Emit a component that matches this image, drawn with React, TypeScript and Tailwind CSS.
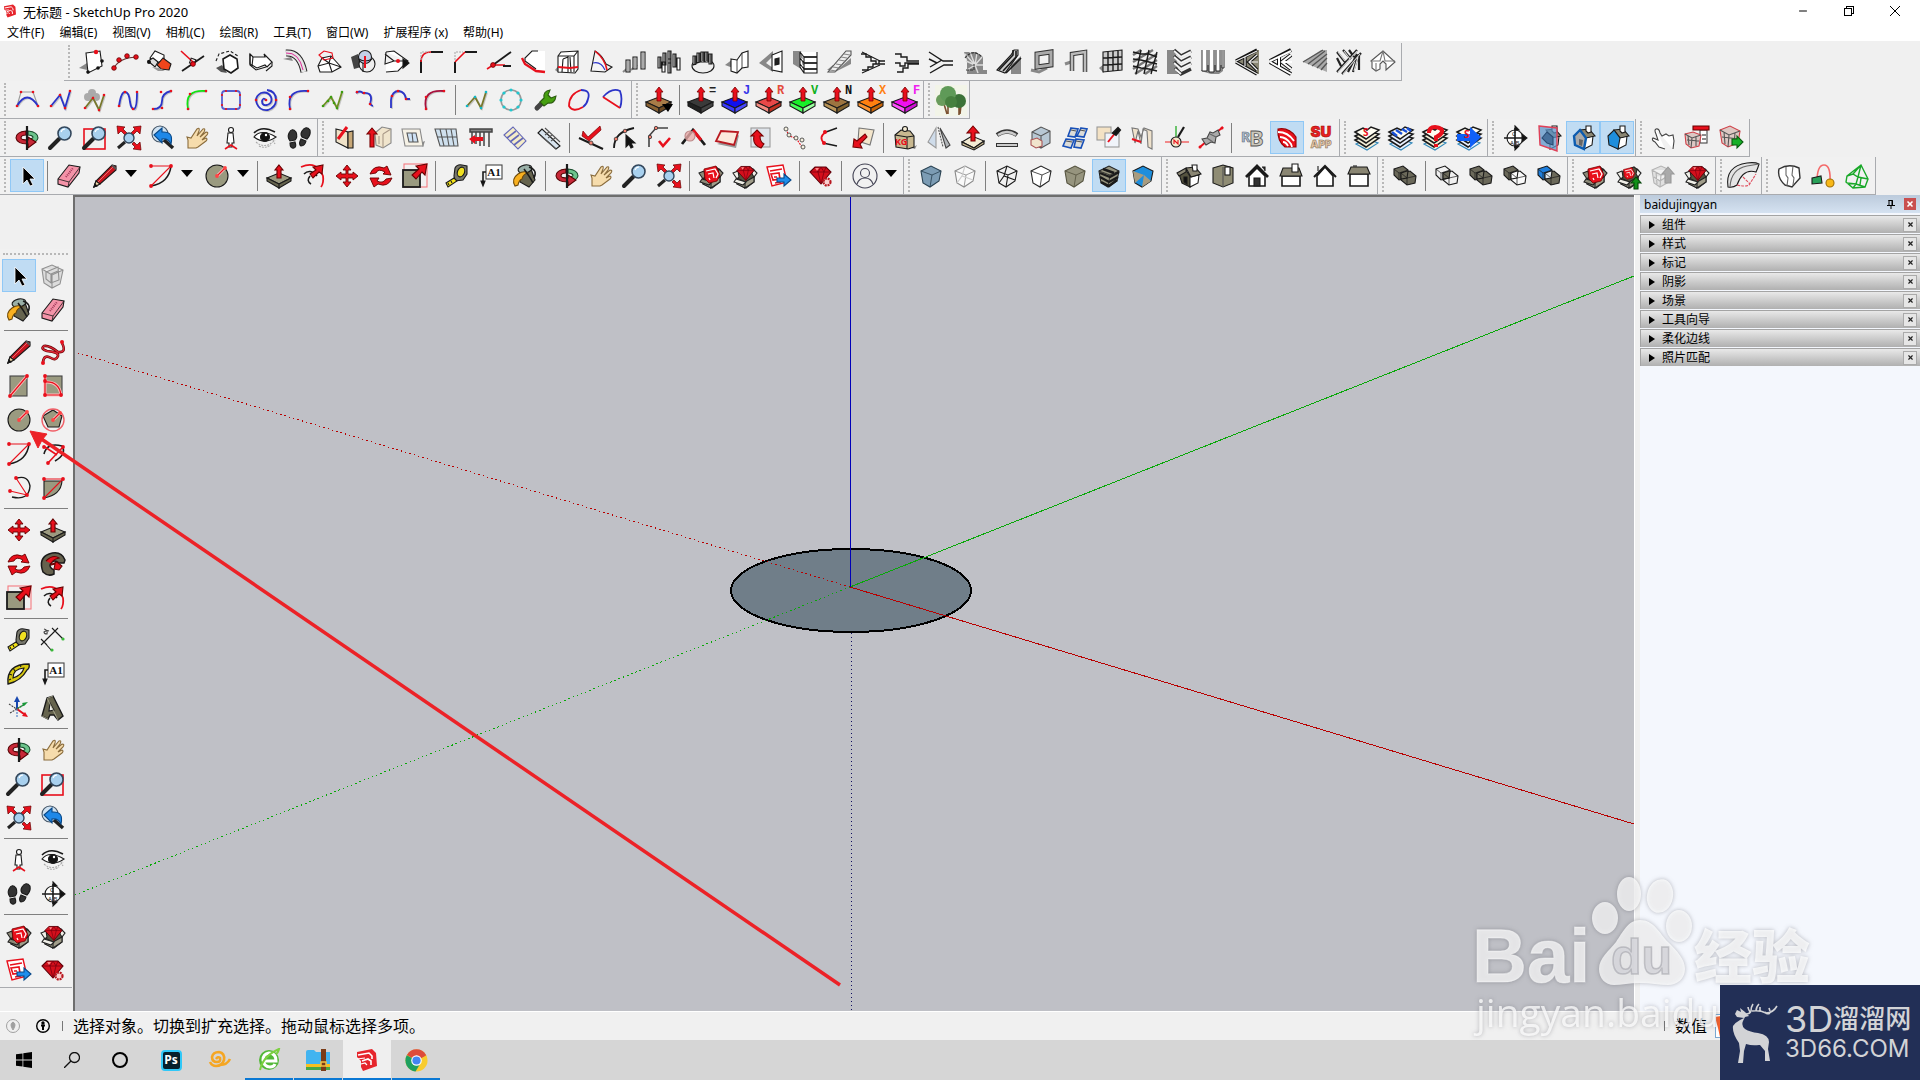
import type { ReactNode } from "react"
import { Minus, X } from "lucide-react"

const RED = "#e8101c"
const BLUE = "#2b34c8"

function Dots({ at, fill = RED, r = 1.4, stroke = "none" }: { at: number[][]; fill?: string; r?: number; stroke?: string }) {
  return (
    <>
      {at.map(([x, y]) => (
        <circle key={`${x}-${y}`} cx={x} cy={y} r={r} fill={fill} stroke={stroke} strokeWidth={0.8} />
      ))}
    </>
  )
}

// curve with its control points
function Curve({ d, color, at, dot }: { d: string; color: string; at: number[][]; dot?: string }) {
  return (
    <>
      <path d={d} stroke="#c4c4c4" strokeWidth={1.6} transform="translate(1 1)" />
      <path d={d} stroke={color} strokeWidth={1.8} />
      <Dots at={at} fill={dot} r={1.3} />
    </>
  )
}

// push/pull slab with a red arrow and a letter in the corner
function Slab({ top, left, right, letter, ink }: { top: string; left: string; right: string; letter?: string; ink?: string }) {
  return (
    <>
      <path d="M-1 14 12 9l12 5-12 6z" fill={top} />
      <path d="M-1 14v4l13 7v-5z" fill={left} />
      <path d="M24 14v4l-12 7v-5z" fill={right} />
      <path d="M12-1l4 5h-2v9h-4V4H8z" fill={RED} stroke="#700" strokeWidth={0.8} />
      {letter && (
        <text x="20" y="6" fontSize="12" fontWeight="bold" fill={ink} stroke="none" fontFamily="Liberation Mono, monospace">
          {letter}
        </text>
      )}
    </>
  )
}

const CUBE = "M2 7 12 2l10 5-2 10-9 6-7-4z"
const CUBE_EDGES = "M2 7l11 4 9-4M13 11l-2 12"

function Cube({ fill, stroke = "#222" }: { fill: string; stroke?: string }) {
  return (
    <>
      <path d={CUBE} fill={fill} stroke={stroke} />
      <path d={CUBE_EDGES} stroke={stroke} strokeWidth={0.8} />
    </>
  )
}

function Gem() {
  return (
    <>
      <path d="M1 8l5-5h11l5 5-10 12z" fill="#d40f1c" stroke="#5c0008" />
      <path d="M1 8h21M6 3l3 5 3-5 3 5 2-5M9 8l3 12 3-12" stroke="#7c0010" strokeWidth={0.8} />
      <path d="M6 4h4L8 7z" fill="#ff8a8a" stroke="none" />
    </>
  )
}

// open cardboard box
function Warehouse({ light, inner }: { light?: boolean; inner: ReactNode }) {
  const flap = light ? "#f0efe8" : "#8d8a78"
  return (
    <>
      <path d="M5 8l12-5 4 3v12l-8 6-9-4z" fill="#55533f" stroke="#222" />
      <path d="M4 14l8 4v6l-8-4zM12 18l9-5v5l-9 6z" fill="#a09d8a" stroke="#222" />
      <path d="M5 7L0 9l4 6 2-2zM20 5l4 4-3 4-2-3zM3 15l-2 3 9 3 3-3z" fill={flap} stroke="#222" />
      {inner}
    </>
  )
}

const redMark = (
  <>
    <path d="M5 5l12-3 4 9-3 6-8 2-4-4z" fill={RED} stroke="#700" strokeWidth={0.8} />
    <path d="M7 7l9-2 3 5-2 4M9 10l5-1 1 5M10 14l1 2" stroke="#fff" strokeWidth={1.2} />
  </>
)

function Solids({ a, b, mid }: { a: string; b: string; mid: string }) {
  return (
    <>
      <path d="M1 5l9-3 5 4-1 8-8 2-5-5z" fill={a} />
      <path d="M8 9l9-2 6 5-1 7-8 2-6-5z" fill={b} />
      <path d="M8 9l6-2 1 0-1 7-6 1z" fill={mid} />
      <path d="M1 5l5 4 9-3M6 9v7M8 9l6 5 9-2M14 14v7" strokeWidth={0.7} />
    </>
  )
}

function Layers({ sheet = "#f4efd8", top }: { sheet?: string; top: ReactNode }) {
  return (
    <>
      <path d="M1 18l11-5 11 4-11 7z" fill={sheet} stroke="#38b" />
      <path d="M0 14l11-5 13 3-13 9z" fill={sheet} strokeWidth={1.5} />
      <path d="M0 10l11-5 13 3-13 9z" fill={sheet} strokeWidth={1.5} />
      <path d="M0 6l8-4 4 2 4-3 8 3-13 9z" fill="#fffdf2" strokeWidth={1.5} />
      {top}
    </>
  )
}

const lens = (
  <>
    <path d="M1 22l9-9" stroke="#222" strokeWidth={4} strokeLinecap="round" />
    <circle cx="15.5" cy="7.500" r="6.500" fill="#a8d0ee" stroke="#33475c" strokeWidth={1.6} />
    <path d="M12 6q1-3 4-3" stroke="#fff" />
  </>
)

const houseBody = (
  <>
    <path d="M13 12l9-2-1 9-8 4z" fill="#fff" />
    <path d="M9 4l9-1 6 7-9 2z" fill="#8a8673" />
    <path d="M15 0h5v6l-3 1-2-2z" fill="#fff" />
  </>
)

const GABLE = "M3 10l6-6 6 8-2 11-9-4z"

const icons: Record<string, ReactNode> = {
  panel: <><path d="M0 18l8-5v7z" fill="#888" stroke="none" /><path d="M7 3l14-2 2 15-14 7z" fill="#fff" /><Dots at={[[17, 2]]} r={2.2} /><Dots at={[[9, 22], [19, 18], [23, 11]]} fill="#111" r={1.8} /></>,
  chain: <><path d="M1 18Q6 8 23 7" stroke="#633" /><Dots at={[[1, 18], [6, 10], [14, 6], [23, 7]]} r={2.3} stroke="#600" /></>,
  slabs: <><path d="M3 8L8 1l9 4 0 5-7 3z" fill="#fff" /><path d="M1 11l5-3 5 4-3 5z" fill="#ddd" /><path d="M10 15l6-7 8 6-2 6-8-1z" fill="#f0451c" /><Dots at={[[2, 12]]} fill="#111" r={2} /><path d="M5 17l6 4h7l-6-3z" fill="#999" stroke="none" /></>,
  cross: <><path d="M0 1l12 11" stroke={RED} strokeWidth={1.6} /><path d="M1 21L23 6" strokeWidth={1.8} /><rect x="9" y="9" width="5" height="5" transform="rotate(20 12 12)" /><Dots at={[[12, 14]]} r={2.4} stroke="#600" /></>,
  poly: <><path d="M1 11L4 4l11-3 8 5" strokeDasharray="3 2" /><path d="M1 18l6-3 5 8-6-1z" fill="#555" stroke="none" /><path d="M8 9l7-4 7 4 1 9-7 5-7-4z" fill="#fff" strokeWidth={1.6} /></>,
  block: <><path d="M1 4l3 3h12l-1-3 8 8-5 5-2-2-8 3-7-4z" fill="#fff" /><path d="M4 7l-1 9M1 4v11l6 5 10-3M23 12v4l-6 5" /></>,
  pipe: <><path d="M0 9l8-2 2 4z" fill="#888" stroke="none" /><path d="M3 3q14-1 18 19" stroke="#222" strokeWidth={7} /><path d="M3 3q14-1 18 19" stroke="#e4e4e4" strokeWidth={5} /><path d="M3 3q13-1 17 17" stroke="#d08" strokeWidth={0.8} /></>,
  dome: <><path d="M1 16L5 8l9-2 10 11-9 5H3z" fill="#fff" /><path d="M1 16l11-3 12 4M12 13l3 9M5 8l7 5 2-7" /><path d="M2 5l5-4 8 2 1 5-9 2z" stroke={RED} /></>,
  sphere: <><path d="M0 7l7-3 3 13-7 2z" fill="#444" stroke="none" /><circle cx="16" cy="14" r="8" fill="#eee" /><circle cx="14" cy="7" r="6.500" fill="#c4cfe8" /><path d="M8 9q6 4 13 0M12 13v9" /><path d="M14 6v12" stroke={RED} strokeWidth={2} /></>,
  boxArrow: <><path d="M1 2l8-1 14 10-10 10-12 1M1 2l-1 12 9-3 14 0M9 11L0 4" fill="#fff" /><path d="M18 9l6 4-6 5z" fill="#111" /><Dots at={[[13, 11]]} r={2} /></>,
  fillet: <><path d="M2 23V10M12 2h12" strokeWidth={2} /><path d="M2 12Q2 2 12 2" stroke={RED} strokeWidth={1.6} /><path d="M2 10V2h8" stroke="#aaa" strokeDasharray="2 1" /></>,
  chamfer: <><path d="M2 23V12M12 2h12" strokeWidth={2} /><path d="M2 12L12 2" stroke={RED} strokeWidth={1.6} /><path d="M2 10V2h8" stroke="#aaa" strokeDasharray="2 1" /></>,
  angle: <><path d="M6 15L24 2" strokeWidth={1.8} /><path d="M0 19l6-4h12" stroke={RED} strokeWidth={1.6} /><path d="M16 16h8" strokeWidth={2} /><Dots at={[[6, 15]]} r={2.4} stroke="#600" /></>,
  edgeSlab: <><path d="M3 9L10 1h14v20l-9-2z" fill="#fff" stroke="none" /><path d="M15 19L4 11l0-3 7-7h6" /><path d="M1 8l3 6 11 7 9 1" stroke={RED} strokeWidth={2.4} /></>,
  boxLoop: <><path d="M0 20l4-5v8z" fill="#888" stroke="none" /><path d="M3 6l3-4 17-1v18l-3 4-17-1z" fill="#fff" /><path d="M3 6h16l4-5M19 6v16M8 9l-1 13M8 9l5-2v15M15 7l1 15" /><path d="M3 17l12 1 8-1" stroke={RED} strokeWidth={1.8} /></>,
  sail: <><path d="M6 1l-4 20 14 1 7-5-6-3Q13 5 6 1z" fill="#f4f4f4" /><path d="M6 1q10 8 12 19" stroke={RED} strokeWidth={1.6} /><path d="M4 13q8-2 12 7" stroke={BLUE} /></>,
  columns: <><path d="M0 22l6-5M8 20l6-5" stroke="#888" strokeWidth={2} /><path d="M3 10h4v12H3zM10 7h4v12h-4zM18 2h4v17h-4z" fill="#fff" /><path d="M5 10v12M12 7v12M20 2v17" stroke="#666" /></>,
  cluster: <><path d="M1 7h3v11H1zM6 3h3v12H6zM11 1h3v12h-3zM5 12h3v10H5zM11 9h3v14h-3zM16 4h3v13h-3zM20 8h3v12h-3z" fill="#fff" /><path d="M3 7v11M8 3v12M13 1v22M18 4v13" strokeWidth={1.2} /></>,
  colonnade: <><ellipse cx="12" cy="16" rx="11" ry="7" fill="#eee" /><path d="M2 15V6h3v8zM6 13V3h3v9zM10 12V2h3v10zM14 12V2h3v10zM18 14V4h3v10z" fill="#fff" /><path d="M4 6v9M8 3v9M12 2v9M16 2v9M20 4v10" strokeWidth={1.4} /></>,
  screen: <><path d="M0 15l8-6v9z" fill="#888" stroke="none" /><path d="M6 9l6 1 5-7 6-2v16l-6 1-5 5-6-2z" fill="#fff" /><path d="M12 10v13M17 3v15" strokeWidth={0.8} /></>,
  wall: <><path d="M0 13L14 1v5L7 13l7 5v4z" fill="#888" stroke="none" /><path d="M13 5L23 1v21l-10-2z" fill="#fff" /><path d="M16 9l4-1v6l-4 1z" fill="#222" /></>,
  shelves: <><path d="M0 1h8l5 21-13-8z" fill="#888" stroke="none" /><path d="M7 2l4 5h13v-5M7 8l4 5h13M7 14l4 5h13M11 7v16h13V4M7 2v15l4 6" fill="#fff" /><path d="M11 7h13M11 13h13M11 19h13" strokeWidth={1.6} /></>,
  ramp: <><path d="M0 20l6-5v5zM8 22L24 8v6z" fill="#888" stroke="none" /><path d="M1 22h7L24 5V1h-5z" fill="#eee" stroke="#555" /><path d="M3 20l6 1M6 17l6 1M9 14l6 1M12 10l6 1M14 7l6 1M17 4l6 1" stroke="#888" /></>,
  stairsA: <><path d="M0 4h5v3h5v4h5v3h9M24 11h-6v3h-6v3H7v3H1" strokeWidth={1.4} /><path d="M1 2l18 9M1 23l18-8" /></>,
  stairsB: <><path d="M0 4h6v3h6v4h12M0 13h5v3h5v-3h14M2 22h6v-4h5v-4h11" strokeWidth={1.4} /></>,
  stairsC: <><path d="M0 2l14 9h10M0 9l8 4M1 23l14-8h9M1 17l12-7" strokeWidth={1.4} /></>,
  spiral: <><path d="M1 2h12l7 5v13h4v4H4V10z" fill="#888" stroke="none" /><path d="M12 15L2 4M12 15L7 2M12 15l2-12M12 15l7-8M12 15h8M12 15L3 11M12 15l-8 5M12 15l3 8" stroke="#ddd" strokeWidth={1.4} /><path d="M2 8Q10-2 19 7M3 20h8v-6" stroke="#333" strokeDasharray="3 1" /></>,
  escalator: <><path d="M14 24V15L24 6v18z" fill="#888" stroke="none" /><path d="M0 20L14 5l3-5h4v5L8 23z" fill="#ccc" /><path d="M2 20L16 5V0M6 21L19 7V1M9 23L24 8" strokeWidth={1.6} /></>,
  frame: <><path d="M0 20l8 2 8-4" stroke="#888" strokeWidth={3} /><path d="M6 4l14-2v13L6 17z" stroke="#333" strokeWidth={5} /><path d="M6 4l14-2v13L6 17z" stroke="#aaa" strokeWidth={3} /></>,
  arch: <><path d="M0 14l6-2" stroke="#888" strokeWidth={3} /><path d="M7 21V4l13-2v20" stroke="#333" strokeWidth={4.500} /><path d="M7 21V4l13-2v20" stroke="#bbb" strokeWidth={2.600} /></>,
  grid: <><path d="M0 18l5-4v9z" fill="#888" stroke="none" /><path d="M4 2l19-2v20L4 22z" fill="#ccc" /><path d="M9 2v19M14 1v20M19 1v19M4 8l19-1M4 15l19-1" strokeWidth={1.4} /></>,
  hatch: <><path d="M0 5l8-5M0 12L20 0M0 19L24 4M2 24l22-14M12 24l12-8" stroke="#777" strokeWidth={2.4} /><path d="M0 2l8 2 8 0 8 3M0 9l8 1 8 2 8 2M0 16l8 2 8 1 8 2M8 0l-5 24M16 0l-5 24M24 2l-6 22" strokeWidth={1.4} /></>,
  louvre: <><path d="M0 0h8l4 24H0z" fill="#888" stroke="none" /><path d="M7 0l7 6 10-5M7 6l7 6 10-5M7 12l7 6 10-5M8 18l6 6 10-5" stroke="#333" strokeWidth={3.4} /><path d="M7 1l7 6 10-5M7 7l7 6 10-5M7 13l7 6 10-5M8 19l6 5" stroke="#f4f4f4" strokeWidth={2} /></>,
  blades: <><path d="M0 21l10 3h8l4-3v-6H4z" fill="#888" stroke="none" /><path d="M1 0v21h5V0M8 0v22h5V0M15 0v21h4V0M21 0v18h2V0" fill="#fff" strokeWidth={0.9} /></>,
  truss: <><path d="M0 11L20 0h4v24h-4z" fill="#8a8774" stroke="none" /><path d="M1 11L22 0M1 12l21 12M10 7v10M22 5l-8 7 8 8" stroke="#111" strokeWidth={3.4} /><path d="M1 11L22 1M1 12l21 12M10 7v9M22 5l-8 7 8 8M14 12h9" stroke="#eee" strokeWidth={1.2} /></>,
  trussB: <><path d="M1 11L22 0M1 12l21 12M10 7v10M22 5l-9 7 9 7" stroke="#111" strokeWidth={4} /><path d="M1 11L22 1M1 12l21 12M10 7v10M22 5l-9 7 9 7M13 12h10" stroke="#fff" strokeWidth={2} /></>,
  corrugated: <><path d="M0 12L18 0h6v22z" fill="#aaa" stroke="none" /><path d="M0 12L20 0M5 14L22 1M9 16L24 4M14 18L24 8M18 20l6-7" stroke="#555" strokeWidth={1.4} /></>,
  rafters: <><path d="M0 2l8 10M6 0l8 9M12 0l5 7M0 8l4 8M0 22L20 0M5 24L24 3M11 22L20 4M16 22l5-16M22 20V4" stroke="#222" strokeWidth={2.200} /><path d="M1 22L20 1M6 24L23 4M1 2l7 9M7 1l6 8M17 21l4-14" stroke="#ddd" /></>,
  roof: <><path d="M0 11L12 1l12 11-9 8v-6l-3-3-3 3v5l-4 2-4-3V12z" fill="#fff" stroke="#555" /><path d="M0 11h9L12 1l2 10h10M5 13v8" stroke="#777" /></>,

  bezier: <><path d="M2 18L6 4h12l5 14" stroke="#999" /><Curve d="M2 18Q12 1 23 18" color={BLUE} at={[[2, 18], [23, 18], [6, 4], [18, 4]]} /></>,
  polyline: <Curve d="M2 18L11 7l5 13 5-17" color={BLUE} at={[[2, 18], [11, 7], [16, 20], [21, 3]]} />,
  polyClover: <><circle cx="9" cy="5" r="4" fill="#aaa" stroke="none" /><circle cx="5" cy="9" r="4" fill="#aaa" stroke="none" /><circle cx="13" cy="9" r="4" fill="#aaa" stroke="none" /><Curve d="M2 20L10 10l6 12 5-15" color="#77772c" at={[[2, 20], [10, 10], [16, 22], [21, 7]]} /></>,
  bspline: <Curve d="M2 18Q4 4 8 4q4 0 5 10 1 7 4 7 3-1 3-17" color={BLUE} at={[[2, 18], [8, 4], [16, 21], [20, 4]]} />,
  sCurve: <Curve d="M2 21q9 0 9-8t9-10" color={BLUE} at={[[2, 21], [11, 20], [10, 4], [20, 3]]} />,
  arcGreen: <Curve d="M3 21Q-1 1 21 3" color="#12e012" at={[[3, 21], [5, 6], [21, 3]]} />,
  roundRect: <><rect x="3" y="3" width="18" height="18" rx="3" stroke="#5560d0" strokeWidth={1.800} /><Dots at={[[3, 7], [7, 3], [17, 3], [21, 7], [21, 17], [17, 21], [7, 21], [3, 17]]} r={1.100} /></>,
  spiralCurve: <Curve d="M13 12q-3-3-4 1 0 5 5 4 6-2 4-8-3-6-10-4-7 4-4 11 3 7 11 6 8-3 8-10 0-9-9-10" color={BLUE} at={[[13, 12], [23, 12], [3, 12]]} />,
  arcBlue: <Curve d="M3 21Q-1 1 21 3" color={BLUE} at={[[3, 21], [3, 9], [21, 3]]} />,
  polyGreen: <Curve d="M2 18L10 9l6 11 5-16" color="#6e8f20" at={[[2, 18], [7, 13], [10, 9], [13, 15], [16, 20], [21, 4]]} dot="#3d9c10" />,
  hook: <Curve d="M1 5q4-3 7 0 9-1 8 7-2 5 2 6" color={BLUE} at={[[2, 4], [9, 5], [15, 16]]} />,
  hookB: <Curve d="M2 20V12Q3 3 10 3q6 1 7 8h4" color={BLUE} at={[[3, 8], [9, 3], [17, 11]]} />,
  arcRed: <Curve d="M3 21Q-1 1 21 3" color="#a8103c" at={[[3, 21], [3, 9], [21, 3]]} />,
  polyCyan: <Curve d="M2 18L10 9l6 11 5-16" color="#77772c" at={[[2, 18], [10, 9], [16, 20], [21, 4]]} dot="#10b8c8" />,
  ring: <><circle cx="12" cy="12" r="10" stroke="#999" strokeWidth={1.600} /><Dots at={[[12, 2], [19, 5], [22, 12], [19, 19], [12, 22], [5, 19], [2, 12], [5, 5]]} fill="#20c8d0" r={1.600} /></>,
  wrench: <><path d="M4 20l7-7" stroke="#444" strokeWidth={5} strokeLinecap="round" /><path d="M7 14l4-4q-1-7 6-8l-2 5 3 3 5-2q-1 8-8 7l-4 3z" fill="#46a010" stroke="#2c5c10" /></>,
  loop: <><path d="M14 2q10 0 7 9-1 5-5 8" stroke={BLUE} strokeWidth={1.800} /><path d="M14 2Q2 6 2 18q4 7 14 1" stroke={RED} strokeWidth={1.800} /></>,
  sector: <><path d="M2 9Q11-1 19 3q3 8 0 17" stroke={BLUE} strokeWidth={1.800} /><path d="M2 9l17 11" stroke={RED} strokeWidth={1.800} /></>,
  jpp: <><Slab top="#a87c48" left="#8a6232" right="#6c4a24" /><path d="M15 16h11l-5 8z" fill="#000" stroke="none" /></>,
  jppBlack: <Slab top="#3a3a3a" left="#222" right="#444" letter="=" ink="#222" />,
  jppJ: <Slab top="#1010f0" left="#3a3aff" right="#4848ff" letter="J" ink="#3434e8" />,
  jppR: <Slab top="#e84848" left="#f48a80" right="#c03020" letter="R" ink="#e44a3c" />,
  jppV: <Slab top="#18f028" left="#48ff58" right="#9cffa0" letter="V" ink="#10b020" />,
  jppN: <Slab top="#9c7440" left="#b89458" right="#80602c" letter="N" ink="#111" />,
  jppX: <Slab top="#ff8010" left="#ff9430" right="#c86408" letter="X" ink="#ff8010" />,
  jppF: <Slab top="#f010f0" left="#ff50ff" right="#d010d8" letter="F" ink="#f020f0" />,
  tree: <><rect x="-4" y="-3" width="32" height="31" fill="#f2f4e8" stroke="none" /><path d="M5 16l3 10M9 14v12M20 18v9M22 17l-1 9" stroke="#7a5030" strokeWidth={1.600} /><circle cx="20" cy="13" r="7" fill="#3c7238" stroke="none" /><circle cx="3" cy="12" r="6" fill="#6a9c5c" stroke="none" /><circle cx="9" cy="6" r="8" fill="#5f9a58" stroke="none" /><circle cx="12" cy="14" r="6" fill="#47803f" stroke="none" /></>,

  orbit: <><path d="M13 5q10 1 10 7-1 5-10 6v-5q5 0 5-2-1-2-5-2z" fill="#6cc48c" stroke="#184c2c" /><path d="M11 5Q1 6 1 12q1 6 12 6v4l8-6-8-5v3Q6 14 6 12q0-3 5-3z" fill="#c82838" stroke="#500" /><path d="M12 0v24" strokeWidth={2.200} /></>,
  zoom: lens,
  zoomWindow: <><rect x="1" y="3" width="21" height="20" stroke={RED} strokeWidth={1.600} />{lens}</>,
  zoomExtents: <><path d="M0 0l8 1-2 2 4 4-2 2-4-4-3 3zM24 0l-8 1 2 2-4 4 2 2 4-4 3 3zM24 24l-8-1 2-2-3-3 2-2 3 3 3-3z" fill={RED} stroke="#600" strokeWidth={0.700} /><path d="M1 22l7-6" stroke="#222" strokeWidth={3} /><circle cx="12" cy="12" r="5" fill="#a8d0ee" stroke="#33475c" strokeWidth={1.400} /></>,
  zoomPrev: <><circle cx="9" cy="8" r="8" fill="#cfe2f2" stroke="#456" /><path d="M13 14l9 8" stroke="#222" strokeWidth={3.500} /><path d="M3 9l8-7v4q12-1 9 12-3-6-9-5v4z" fill="#1e88e8" stroke="#084888" /></>,
  pan: <path d="M3 22V14l-1-3 4 1 6-9q3-2 2 2l-2 5 6-7q3-1 1 3l-4 5 6-5q3 0 1 3l-5 5 4-2q2 1 0 3l-8 6-2 1z" fill="#f6dcac" stroke="#8a6c3c" />,
  position: <><path d="M9 7h5l1 10h-2v4h-3v-4H8z" fill="#fff" /><circle cx="12" cy="4" r="2.500" fill="#fff" /><path d="M6 23l6-4 6 4" stroke={RED} strokeWidth={1.600} /></>,
  eye: <><path d="M1 11Q8 2 23 11 12 19 1 11z" fill="#fff" /><path d="M1 7Q9-1 22 6" strokeWidth={1.6} /><circle cx="12" cy="11" r="4.500" fill="#111" /><Dots at={[[13, 9]]} fill="#fff" r={1.200} /><path d="M3 16q9 8 19-2M6 20q6 3 12-1M20 14l2 4" stroke="#aaa" strokeDasharray="2 1" /></>,
  walk: <path d="M2 7q3-6 7-1 2 5-1 8l-5 1Q0 11 2 7zM3 17l5-1q2 5-1 6-4 1-4-5zM15 5q4-6 8-1 1 5-3 9l-5-2q-2-3 0-6zM14 13l5 2q-1 5-5 5-3-2 0-7z" fill="#333" />,
  sketchWall: <><path d="M3 3l12 3v16L3 16z" fill="#efe2c8" /><path d="M15 6l5-1v17h-5z" fill="#c8a878" /><path d="M5 13L14 1" stroke={RED} strokeWidth={3} /></>,
  doors: <><path d="M8 7l7-6 9 2v14l-8 5-7-3z" fill="#f0e4cc" stroke="#888" /><path d="M16 8l8-5M16 8v14M12 10v8" stroke="#a98" /><path d="M5 2l5 6H7v13H3V8H0z" fill={RED} stroke="#700" /></>,
  opening: <><path d="M19 17l5-2-2 6z" fill="#888" stroke="none" /><path d="M1 3h18l3 17H4z" fill="#f6f2e6" stroke="#888" /><path d="M6 7h9l2 9H8z" fill="#cfe2f4" stroke="#555" /><path d="M11 7l1 9" stroke="#555" /></>,
  curtain: <><path d="M0 3h21l2 17H5z" fill="#cfe0ee" stroke="#555" /><path d="M5 3l4 17M11 3l3 17M16 3l3 17M2 11h20" stroke="#555" /></>,
  rails: <><path d="M1 3h22v3H1zM3 6v12M7 6v12M11 6v14M15 6v14M20 6v15" strokeWidth={1.500} stroke="#444" fill="#888" /><path d="M0 13l6-4v2h8v4H6v3z" fill={RED} stroke="none" /></>,
  stepsY: <><path d="M1 9l9-8 13 14-8 8z" fill="#f4ecc8" stroke="#6468b8" /><path d="M4 12l9-7M7 16l9-7M11 19l9-7" stroke="#6468b8" strokeWidth={1.600} /></>,
  stepsB: <><path d="M1 7l4-4 18 17-4 3z" fill="#d8e4ee" /><path d="M8 2l15 14M4 10l15 13M8 9l4-3M11 12l4-3M14 15l4-3" stroke="#555" /></>,
  checkLine: <><path d="M0 12l24 11" strokeWidth={2} /><path d="M4 5l5 6L21 0l1 4L10 15 3 10z" fill={RED} stroke="#700" strokeWidth={0.700} /><Dots at={[[12, 17]]} fill="#f08070" stroke="#333" r={2} /></>,
  pickLine: <><path d="M1 22q0-16 20-20" strokeWidth={1.800} /><Dots at={[[3, 13], [12, 5]]} fill="#f08070" stroke="#333" r={1.800} /><path d="M13 9v12l3-3 2 4 2-1-2-4h4z" fill="#111" /></>,
  checkCorner: <><path d="M2 21V10L9 2h12" stroke="#444" strokeWidth={1.600} /><Dots at={[[3, 11], [9, 2]]} fill="#f08070" stroke="#333" r={1.700} /><path d="M12 15l4 5 7-8" stroke={RED} strokeWidth={2.600} /></>,
  apex: <><path d="M1 18L12 4l12 15" strokeWidth={2.800} /><path d="M12 4l8 10" stroke={RED} strokeWidth={3} /><circle cx="9" cy="10" r="5" fill="#e8aaa8" fillOpacity={0.800} stroke="#b88" /></>,
  redFace: <><path d="M2 18l19 4 3-13z" fill="#999" stroke="none" /><path d="M6 5l17 1-4 13-18-4z" fill="#fce8dc" stroke="#b81820" strokeWidth={1.800} /></>,
  turnUp: <><rect x="2" y="2" width="19" height="19" fill="#dfe4ea" stroke="#999" /><path d="M8 4l6 6h-3q0 6 4 8l-3 4Q3 19 5 10H2z" fill={RED} stroke="#700" /></>,
  nodes: <><path d="M3 3l3 7 7 2 6 9" stroke={RED} strokeDasharray="2 1" /><Dots at={[[3, 3], [6, 9], [13, 12], [19, 14], [20, 21]]} fill="#f4f0e0" stroke="#333" r={2} /></>,
  bend: <><path d="M20 2L9 6M6 17l14 3" strokeWidth={1.400} /><path d="M9 6Q1 11 7 17" stroke={RED} strokeWidth={1.800} /><Dots at={[[8, 6], [7, 17]]} r={2} /></>,
  faceArrow: <><path d="M8 2l15 2-4 15-12-4z" fill="#f4e6cc" stroke="#777" /><path d="M14 8l2 3-7 7 2 4-9-1 1-8 3 2z" fill={RED} stroke="#700" /></>,
  weight: <><path d="M19 22l5-3-2 4z" fill="#888" stroke="none" /><path d="M2 9l6-5 9 1 4 5v11l-6 2-12-2z" fill="#c8b890" /><path d="M2 9l12 2 7-1M14 11v12" /><circle cx="12" cy="3" r="2.500" fill="#f4ecd4" /><text x="2" y="19" fontSize="9" fontWeight="bold" fill={RED} stroke="none">KG</text></>,
  mirror: <><path d="M9 2v20L1 16z" fill="#cfdcea" stroke="#999" /><path d="M13 2l10 17-4 3z" fill="#b0b4b8" stroke="#444" /><path d="M11 1l5 20" stroke="#555" strokeDasharray="2 1" /></>,
  raise: <><path d="M1 16l10-6 12 5-10 7z" fill="#f4ecd4" /><path d="M1 16v3l12 5 10-6v-3l-10 7z" fill="#c8b890" /><path d="M12 0l6 7h-4v8h-4V7H6z" fill={RED} stroke="#700" /></>,
  curveLine: <><path d="M2 9q10-7 20 0" stroke="#333" strokeWidth={4.500} /><path d="M3 9q9-6 18 0" stroke="#ccc" strokeWidth={2.400} /><path d="M1 19h22" stroke="#333" strokeWidth={4} /><path d="M2 19h20" stroke="#ccc" strokeWidth={2} /></>,
  glassBox: <><path d="M3 6l9-5 9 4v12l-9 5-9-5z" fill="#b8c8d4" stroke="#555" /><path d="M3 6l9 4 9-5M12 10v12" stroke="#555" /><path d="M2 14l6-2 5 3v5l-6 2-5-3z" fill="#f0e4cc" stroke="#a55" /></>,
  tiles: <><path d="M8 2l7 1-3 8-7-1zM18 2l6 1-3 8-7-1zM3 13l8 1-3 8-8-2zM13 13l8 1-3 8-7-1z" fill="#dcdcd8" stroke="#1850b8" strokeWidth={1.600} /><path d="M8 4l5 1M17 4l5 1M3 15l6 1M13 15l6 1" stroke="#555" /></>,
  eyedrop: <><rect x="0" y="1" width="14" height="13" fill="#f4e2c4" stroke="#999" /><rect x="8" y="7" width="14" height="14" fill="#f0f4fa" stroke="#999" /><path d="M11 16l8-10" stroke={RED} strokeWidth={2} /><path d="M16 7l5-5 2 2-4 5z" fill="#111" strokeWidth={2} /></>,
  folds: <><path d="M1 2l3 15 3-12 3 13 2-15 4 2 1 16 4 2V5l-8-3-3 9-3-8z" fill="#efe2cc" stroke="#777" /><path d="M1 13l9 3" stroke={RED} strokeWidth={2} /></>,
  northAxis: <><path d="M0 16h24" stroke="#f07070" strokeWidth={1.600} /><path d="M11 0v12" stroke="#6cc46c" strokeWidth={2} /><path d="M13 11l6-10" strokeWidth={2.200} /><circle cx="11" cy="16" r="5" fill="#f4e8cc" /><path d="M9 18v-4l4 4v-4" stroke={RED} /></>,
  rope: <><path d="M1 21l7-6M18 6l6-5" stroke={RED} strokeWidth={2} /><path d="M3 13l5-1 3-6 3 1 5-3 2 5-4 2-1 6-4-1-5 3-2-3z" fill="#aaa" stroke="#444" /><path d="M8 12l6 4M11 8l6 3" stroke="#666" /><Dots at={[[1, 21], [23, 2]]} r={1.500} /></>,
  rb: <><text x="0" y="16" fontSize="14" fontWeight="bold" fill="#aac0cc" stroke="#667" strokeWidth={0.600}>R</text><text x="8" y="20" fontSize="22" fontWeight="bold" fill="#ccc8bc" stroke="#555" strokeWidth={0.800}>B</text></>,
  suapp: <><path d="M3 3Q14 1 21 11v10H10Q2 15 3 3z" fill={RED} stroke="#900" /><path d="M3 6q10 0 16 9M5 11q6 0 11 7l1 3M8 16q3 0 5 4" stroke="#fff" strokeWidth={1.800} /></>,
  suText: <><text x="12" y="11" textAnchor="middle" fontSize="15" fontWeight="900" fill="#e82020" stroke="#900" strokeWidth={0.500} fontFamily="Inter, sans-serif">SU</text><text x="12" y="22" textAnchor="middle" fontSize="10" fontWeight="900" fill="#e8c8a4" stroke="#765" strokeWidth={0.500} fontFamily="Inter, sans-serif">APP</text></>,
  layerS: <Layers top={<text x="8" y="10" fontSize="10" fontWeight="bold" fill={RED} stroke="none">S</text>} />,
  layerBlue: <Layers sheet="#e8f0ff" top={<path d="M3 6l5 4M7 4l6 4M13 3l5 3M18 2l4 3" stroke="#1850d8" strokeWidth={2.400} />} />,
  layerQ: <Layers top={<path d="M6 7q0-6 6-6 8 1 7 5-1 3-6 5v4M13 18v3" stroke={RED} strokeWidth={4} />} />,
  layerArrow: <Layers sheet="#e8f0ff" top={<><path d="M0 8h13V1l11 10-11 11v-7H0z" fill="#1060f8" stroke="none" /><text x="7" y="12" fontSize="10" fontWeight="bold" fill={RED} stroke="none">S</text></>} />,
  section: <><circle cx="12" cy="12" r="8" fill="#fff" /><path d="M1 12h22M12 2v20" strokeWidth={1.600} /><path d="M12 0l4 4h-4zM12 20l4 0-4 4zM19 8l5 4-5 4z" fill="#111" /><text x="9" y="10" fontSize="6" fill="#111" stroke="none">C</text><text x="7" y="19" fontSize="6" fill="#111" stroke="none">A B</text></>,
  sectionPlane: <>{houseBody}<path d="M2 0l18 2v23L3 19z" fill="#5c94c8" fillOpacity={0.750} stroke="#e04058" strokeWidth={1.400} /><path d="M5 12l5-6 6 5v8l-6-2z" fill="#46709c" stroke="#2a4c74" /></>,
  sectionCut: <>{houseBody}<path d={GABLE} fill="#aaa" stroke="#0c5cb0" strokeWidth={2.400} /><path d="M8 13l4 1-1 6-3-1z" fill="#666" stroke="none" /></>,
  sectionFill: <>{houseBody}<path d={GABLE} fill="#1e8edc" /></>,
  finger: <path d="M5 3q3-1 4 4l2 3 4-2 3 2 4-1 1 6-1 8M5 3q-2 1 0 5l2 6-5-2q-2 2 2 4l4 5 6 2" fill="#fff" stroke="#444" />,
  cubePanel: <><rect x="15" y="4" width="7" height="13" fill="#fff" stroke="#444" /><path d="M8 0h16v4H8z" fill={RED} stroke="#600" /><path d="M17 9h4M17 13h4" /><path d="M0 8l8-2 8 3-2 11-8 2-5-4z" fill="#ddc8c4" stroke="#d04048" /><path d="M0 8l7 4 9-3M7 12l-1 10M3 10l1 9M11 10v10M2 14l12 1" stroke="#555" /></>,
  cubePlay: <><path d="M1 4l10-4 10 5-2 12-10 4-6-4z" fill="#ddc8c4" stroke="#d04048" /><path d="M1 4l9 5 11-4M10 9l-1 12M5 6l1 12M16 7l-1 12M3 11l17 2" stroke="#555" /><path d="M13 13h5v-3l6 6-6 6v-3h-5z" fill="#18b028" stroke="#0a5c10" /></>,

  select: <path d="M8 3v17l4-4 3 6 3-1-3-6h5z" fill="#000" stroke="#fff" strokeWidth={0.800} />,
  eraser: <><path d="M1 15L12 1l11 2-1 6-11 14-10-3z" fill="#f493a8" /><path d="M1 15l11 3L23 3M12 18l-1 5" strokeWidth={0.8} /><path d="M9 13l7-9" stroke="#a03858" strokeWidth={2} strokeDasharray="1 1" /></>,
  pencil: <><path d="M1 23l2-6L19 1l4 1v4L7 20z" fill="#c8141e" /><path d="M1 23l2-6 4 3z" fill="#f0d8a8" /><path d="M1 23l1-3 2 2z" fill="#000" /><path d="M5 18L20 3" stroke="#f08080" strokeWidth={0.8} /><path d="M19 1l4 4" stroke="#555" strokeWidth={2} /></>,
  arc: <><path d="M2 22q18-3 20-20" strokeWidth={1.600} /><path d="M2 2h20L2 22" stroke={RED} /><Dots at={[[2, 2], [22, 2], [2, 22]]} r={1.900} /></>,
  circle: <><circle cx="12" cy="12" r="11" fill="#9a9a80" /><path d="M12 12l8-8" stroke="#fbb" strokeWidth={3} /><path d="M12 12l8-8" stroke={RED} /><Dots at={[[12, 12], [20, 4]]} fill="#f44" r={1.900} /></>,
  pushPull: <><path d="M0 14l12-5 12 5-12 6z" fill="#9c9a80" /><path d="M0 14v3l12 7v-4zM24 14v3l-12 7v-4z" fill="#66644e" /><path d="M12 1l4 5h-2v8h-4V6H8z" fill={RED} stroke="#600" /></>,
  offset: <><path d="M0 3Q16-4 22 12q1 7-2 11" stroke={RED} strokeWidth={1.800} /><path d="M3 10q6-6 13 2M9 12q-4 5 1 8" strokeWidth={1.600} /><path d="M22 1l-1 9-3-2-6 6-3-4 6-4-3-3z" fill={RED} stroke="#600" /></>,
  move: <path d="M12 1l4 5h-3v4h5V8l5 4-5 4v-2h-5v4h3l-4 5-4-5h3v-4H6v2l-5-4 5-4v2h5V6H8z" fill={RED} stroke="#600" strokeWidth={0.900} />,
  rotate: <path d="M1 10Q5 0 15 4l3-2 4 9-8-1 2-2Q9 4 7 9zM23 14Q19 24 9 20l-4 3-4-9 9 0-2 3q6 3 9-2z" fill={RED} stroke="#600" strokeWidth={0.900} />,
  scale: <><rect x="1" y="0" width="23" height="23" stroke="#f47a80" /><rect x="0" y="6" width="17" height="17" fill="#9a9a80" strokeWidth={1.800} /><path d="M24 0l-2 11-3-3-6 7-4-4 7-6-3-3z" fill={RED} stroke="#600" /></>,
  tape: <><path d="M10 4q2-4 7-3l5 1v8l-4 6-8 1-1-5z" fill="#77776c" /><ellipse cx="16" cy="8" rx="3.500" ry="5" fill="#f0e020" transform="rotate(20 16 8)" /><path d="M9 14l-8 5 2 4 9-6z" fill="#f4e418" /><path d="M3 19l1 2M6 17l1 2" /></>,
  label: <><rect x="7" y="1" width="16" height="14" fill="#fff" stroke="#444" /><text x="15" y="12" textAnchor="middle" fontSize="11" fontWeight="bold" fill="#111" stroke="none" fontFamily="Liberation Serif, serif">A1</text><path d="M7 8H4v10" strokeWidth={1.600} /><path d="M2 17h4l-2 5z" fill="#111" /></>,
  paint: <><path d="M7 5l10-3 5 14-6 7-9-5z" fill="#66644e" /><ellipse cx="12" cy="5" rx="7" ry="4" fill="#9ab0a8" transform="rotate(-12 12 5)" /><path d="M2 22q-4-7 3-12 6-4 10-1-5 1-6 6-3 1-4 6z" fill="#f8b020" stroke="#6c4808" /><path d="M11 5q6 8 9 14M16 3q9 3 5 11" strokeWidth={1.5} /></>,
  boxMark: <Warehouse inner={redMark} />,
  boxGem: <Warehouse light inner={<g transform="translate(3 0) scale(.82)"><Gem /></g>} />,
  layout: <><path d="M0 3l16-2 4 17-15 4z" fill="#fff" stroke={RED} strokeWidth={1.400} /><path d="M3 7l12-2M4 10l8-1 1 6-7 1zM7 13h3M8 19l6-1" stroke={RED} strokeWidth={1.600} /><path d="M10 14h7v-4l7 6-7 6v-4h-7z" fill="#1e8eec" stroke="#084888" /></>,
  gem: <><Gem /><circle cx="18" cy="18" r="3.500" fill="#f8d0d0" stroke="#b81820" strokeWidth={2.200} strokeDasharray="2 .8" /></>,
  user: <><circle cx="12" cy="12" r="12" stroke="#445" /><circle cx="12" cy="9" r="4.500" stroke="#445" /><path d="M4 20q2-6 8-6t8 6" stroke="#445" /></>,
  xray: <Cube fill="#7c9cb4" stroke="#284050" />,
  backEdges: <><Cube fill="#fafafa" stroke="#888" /><path d="M4 19l5-7 11 4M9 12l3-10" stroke="#ccc" /></>,
  wireframe: <><path d={CUBE} /><path d={CUBE_EDGES} /><path d="M4 19l5-7 11 4M9 12l3-10" /></>,
  hidden: <Cube fill="#fff" />,
  shaded: <Cube fill="#96947e" stroke="#55533f" />,
  textured: <><Cube fill="#96947e" /><path d="M3 9l10 4 9-5M3 13l9 5 9-5M4 18l8 4 8-6M6 5l11 4" strokeWidth={2.400} /></>,
  mono: <><path d={CUBE} fill="#1e8edc" /><path d="M2 7l11 4-9 8zM13 11l7 6-9 6z" fill="#a89c80" stroke="none" /></>,
  iso: <><path d="M2 10l7-4 5 8-1 9-8-4z" fill="#55533f" /><path d="M13 13l9-2-1 8-8 4z" fill="#fff" /><path d="M9 4l9-1 6 7-10 3zM9 4L0 9l2 3 7-4z" fill="#8a8673" /><path d="M15 1h5v6l-4 0z" fill="#fff" /><path d="M7 13h3v7l-3-2z" fill="#111" /></>,
  topView: <><path d="M2 4l10-3 10 3v15l-10 4-10-4z" fill="#8f8c74" /><path d="M12 3v20" stroke="#555" /><rect x="14" y="3" width="5" height="8" fill="#fff" /></>,
  front: <><path d="M4 12l8-8 8 8v10H4z" fill="#fff" strokeWidth={1.600} /><path d="M1 13L12 2l11 11" strokeWidth={2.800} /><path d="M9 14h6v8H9zM17 3h3v4" fill="#333" /></>,
  right: <><path d="M3 12h18v10H3z" fill="#fff" strokeWidth={1.600} /><path d="M4 4h16l3 8H1z" fill="#8a8673" /><path d="M13 0h6v8h-6z" fill="#fff" /></>,
  back: <><path d="M4 12l8-9 8 9v10H4z" fill="#fff" strokeWidth={1.600} /><path d="M1 13L12 2l11 11" strokeWidth={2} /><path d="M5 2v5" /></>,
  left: <><path d="M3 10h18v12H3z" fill="#fff" strokeWidth={1.600} /><path d="M4 3h16l3 7H1z" fill="#8a8673" /><path d="M6 2h4" /></>,
  shell: <Solids a="#6b695a" b="#6b695a" mid="#6b695a" />,
  intersect: <Solids a="none" b="none" mid="#6b695a" />,
  union: <Solids a="#6b695a" b="#6b695a" mid="#7a7868" />,
  subtract: <Solids a="#6b695a" b="#fafafa" mid="#fafafa" />,
  trim: <Solids a="#1e7edc" b="#6b695a" mid="#dfe8f0" />,
  boxUp: <><Warehouse light inner={<g transform="translate(3 2) scale(.7)">{redMark}</g>} /><path d="M19 13l5 6h-3v6h-4v-6h-3z" fill="#109018" stroke="#044408" /></>,
  shareGrey: <><path d="M1 6l9-4 9 4-1 12-9 5-6-4zM1 6l9 5 9-5M10 11l-1 12M5 8l1 12M3 13l6 4 9-6" fill="#e0e0e0" stroke="#b4b4b4" /><path d="M17 3l6 7h-3v9h-6v-9h-3z" fill="#aaa" stroke="#999" /></>,
  bowl: <><path d="M-3 23Q-6 2 16-1q8-1 12 1-1 4-3 8-13-4-19 13-4 3-9 2z" fill="#e4e4e4" /><path d="M-1 23Q0 5 16 2q6-1 12-2" stroke="#666" /><path d="M6 21q8 2 12 0l7-11M12 13l7 7" stroke="#e05060" strokeDasharray="3 1" /></>,
  tooth: <><path d="M2 5q10-6 20-1l1 10-8 9-7-2Q0 14 2 5z" fill="#fff" stroke="#333" strokeWidth={1.400} /><path d="M9 3v8l2 3-1 8M16 2l-1 9 2 3-1 7" stroke="#666" /></>,
  follow: <><path d="M6 18Q6 1 13 1t6 18" stroke="#f46a6a" strokeWidth={1.600} /><path d="M1 14l9-2 1 7-10 1z" fill="#28a058" /><circle cx="19" cy="19" r="4" fill="#f8b818" stroke="#a07008" /></>,
  gemGreen: <path d="M2 12L16 1l7 14-3 8-12 1-7-6zM2 12l6-2 5 3 10 2M8 10l8-9M13 13l-2 7-9-1M11 20l9 3M11 20l-3 4M13 13l3-12M16 14l-1 7" stroke="#18a828" strokeWidth={1.400} />,

  component: <path d="M1 5l10-4 11 5-3 14-8 4-8-5zM1 5l10 6 11-5M11 11v13M5 8l12-5 1 13-8 3-5-4zM10 10l7-3M10 19v-9M5 8v7" fill="#dcdcdc" stroke="#909090" />,
  freehand: <><path d="M21 3q5 10-4 9Q8 5 3 6q-4 3 3 5 12 1 11 5-2 5-7 2-7-4-8 4" stroke="#600" strokeWidth={2.600} /><path d="M21 3q5 10-4 9Q8 5 3 6q-4 3 3 5 12 1 11 5-2 5-7 2-7-4-8 4" stroke="#e02838" strokeWidth={1.400} /><Dots at={[[21, 2], [2, 23]]} r={2} /></>,
  rect: <><rect x="3" y="2" width="17" height="20" fill="#9a9a80" stroke="#444" /><path d="M3 22L20 2" stroke="#fbb" strokeWidth={3} /><path d="M3 22L20 2" stroke={RED} strokeWidth={1.200} /><Dots at={[[3, 22], [20, 2]]} r={1.900} /></>,
  rotRect: <><rect x="4" y="2" width="17" height="19" fill="#9a9a80" stroke="#444" /><path d="M4 2v19h17M4 8q14-1 16 13" stroke="#fbb" strokeWidth={3} /><path d="M4 2v19h17M4 8q14-1 16 13" stroke={RED} strokeWidth={1.200} /><Dots at={[[4, 2], [4, 7], [4, 21], [20, 21]]} r={1.900} /></>,
  polygon: <><path d="M12 2l9 6-3 11H7L2 8z" fill="#9a9a80" /><circle cx="12" cy="12" r="11" stroke="#f06068" strokeWidth={1.400} /><path d="M12 12l7-7" stroke="#fbb" strokeWidth={3} /><path d="M12 12l7-7" stroke={RED} /><Dots at={[[12, 12], [19, 5]]} fill="#f44" r={1.900} /></>,
  arc2: <><path d="M3 12Q6 0 21 4q5 8-7 15" strokeWidth={1.600} /><path d="M4 5l12 8M7 21L21 6" stroke={RED} strokeWidth={1.600} /><Dots at={[[3, 5], [7, 21], [22, 5]]} r={1.900} /></>,
  arc3: <><path d="M10 2Q21-1 23 10q-1 15-18 11" strokeWidth={1.400} /><path d="M9 2l11 17L3 15" stroke={RED} /><Dots at={[[9, 2], [3, 15], [20, 19]]} r={1.900} /></>,
  pie: <><path d="M3 22V5h18Q20 19 3 22z" fill="#9a9a80" /><path d="M3 3h19L3 22" stroke={RED} /><Dots at={[[3, 3], [22, 3], [3, 22]]} r={1.900} /></>,
  followMe: <><path d="M2 20Q-3 6 8 2q12-4 16 6l-1 3-5 0q-5-4-8 0-3 4 3 7v4q-6 3-11-2z" fill="#66624e" strokeWidth={1.5} /><path d="M5 9q7-7 13-3-8 2-8 7l4-1-1 5 5 1 3-4-5-4-5 2" fill={RED} stroke="#600" /></>,
  dimension: <><path d="M3 14L14 3M3 14l8 9M14 3l8 8M0 11l6 6M11 0l6 6M0 17l6-6M11 6l6-6" /><path d="M3 1q4 1 3 5-3 0-3-2 3-2 5-1" stroke="#444" /><Dots at={[[11, 22], [22, 11]]} fill="#38b838" r={1.600} /></>,
  protractor: <><path d="M1 22Q-1 2 22 2q1 4-2 6Q14 19 1 22z" fill="#d8c810" strokeWidth={1.4} /><path d="M6 16Q6 7 17 6q-2 7-11 10z" fill="#f1f1f1" /><path d="M2 18l2-1M2 12l3 1M6 6l2 3M13 3l1 2" /></>,
  axes: <><path d="M2 8l18 12M3 17l15-9" stroke="#444" strokeDasharray="2 1" /><path d="M10 13V5" stroke="#1848b0" strokeWidth={2} /><path d="M7 6l3-6 3 6z" fill="#1848b0" stroke="none" /><path d="M10 13l8-5" stroke="#189838" strokeWidth={1.600} strokeDasharray="2 1" /><path d="M21 6l-6 1 2 3z" fill="#189838" stroke="none" /><path d="M21 21l-6-1 3-4z" fill={RED} stroke="none" /><path d="M10 13l7 5" stroke={RED} strokeWidth={2} /><path d="M10 13v9" stroke="#4878c0" strokeDasharray="2 1" /></>,
  text3d: <><path d="M1 20L6 2l6-2 10 20-5 4-4-5-4 0-2 4z" fill="#66644e" strokeWidth={1.4} /><path d="M9 7l4 7-5 1z" fill="#f1f1f1" /><path d="M6 2l11 22M1 20l6 3M12 0l-5 2" stroke="#b8b69c" strokeWidth={0.8} /></>,
}

// "|" separator, leading "*" active, trailing ">" drop-down
const topRows = [
  ["panel chain slabs cross poly block pipe dome sphere boxArrow fillet chamfer angle edgeSlab boxLoop sail columns cluster colonnade screen wall shelves ramp stairsA stairsB stairsC spiral escalator frame arch grid hatch louvre blades truss trussB corrugated rafters roof"],
  [
    "bezier polyline polyClover bspline sCurve arcGreen roundRect spiralCurve arcBlue polyGreen hook hookB arcRed | polyCyan ring wrench loop sector",
    "jpp | jppBlack jppJ jppR jppV jppN jppX jppF",
    "tree",
  ],
  [
    "orbit zoom zoomWindow zoomExtents zoomPrev pan position eye walk",
    "sketchWall doors opening curtain rails stepsY stepsB | checkLine pickLine checkCorner apex redFace turnUp nodes bend faceArrow | weight mirror raise curveLine glassBox tiles eyedrop folds northAxis rope | rb *suapp suText",
    "layerS layerBlue layerQ layerArrow",
    "section sectionPlane *sectionCut *sectionFill",
    "finger cubePanel cubePlay",
  ],
  [
    "*select | eraser pencil> arc> circle> | pushPull offset move rotate scale | tape label paint | orbit pan zoom zoomExtents | boxMark boxGem layout | gem | user>",
    "xray backEdges | wireframe hidden shaded *textured mono",
    "iso topView front right back left",
    "shell | intersect union subtract trim",
    "boxMark boxUp shareGrey boxGem",
    "bowl",
    "tooth follow gemGreen",
  ],
]

const sideGroups = [
  "*select component paint eraser",
  "pencil freehand rect rotRect circle polygon arc arc2 arc3 pie",
  "move pushPull rotate followMe scale offset",
  "tape dimension protractor label axes text3d",
  "orbit pan zoom zoomWindow zoomExtents zoomPrev",
  "position eye walk section",
  "boxMark boxGem layout gem",
]

const menus = ["文件(F)", "编辑(E)", "视图(V)", "相机(C)", "绘图(R)", "工具(T)", "窗口(W)", "扩展程序 (x)", "帮助(H)"]
const trays = ["组件", "样式", "标记", "阴影", "场景", "工具向导", "柔化边线", "照片匹配"]

function Icon({ name }: { name: string }) {
  return (
    <svg viewBox="0 0 24 24" className="size-6 overflow-visible" fill="none" stroke="#1a1a1a" strokeWidth={1.1}>
      {icons[name]}
    </svg>
  )
}

function ToolButton({ item }: { item: string }) {
  const active = item.startsWith("*")
  const name = item.replace("*", "")
  return (
    <button
      aria-label={name}
      className={`flex h-[33px] w-[34px] shrink-0 items-center justify-center border ${
        active ? "border-[#90c8f6] bg-[#c0dcf3]" : "border-transparent"
      }`}
    >
      <Icon name={name} />
    </button>
  )
}

function ToolItem({ item }: { item: string }) {
  if (item === "|") {
    return <div className="mx-[3px] h-[30px] w-0.5 shrink-0 border-l border-[#808080]" />
  }
  if (item.endsWith(">")) {
    const name = item.slice(0, -1)
    return (
      <div className="flex shrink-0">
        <button aria-label={name} className="flex h-[33px] w-[38px] items-center justify-center">
          <Icon name={name} />
        </button>
        <button aria-label={`${name} options`} className="flex w-[18px] items-center pb-1 pl-px">
          <svg viewBox="0 0 12 7" className="h-[7px] w-3">
            <path d="M0 0h12L6 7z" />
          </svg>
        </button>
      </div>
    )
  }
  return <ToolButton item={item} />
}

function Toolbar({ items }: { items: string }) {
  return (
    <div className="flex shrink-0 items-center border-b border-[#a9abaf] bg-[#f1f1f1]">
      <div className="ml-1 mr-1 h-[33px] w-0.5 border-l-2 border-dotted border-[#b8b8b8]" />
      {items.split(" ").map((item, i) => (
        <ToolItem key={i} item={item} />
      ))}
      <div className="ml-px h-full w-px bg-[#a9abaf]" />
    </div>
  )
}

function Viewport() {
  return (
    <main className="min-w-0 flex-1 overflow-hidden border-l-2 border-t-2 border-[#6e6e6e] bg-[#bfc0c6]">
      <svg viewBox="0 0 1559 814" preserveAspectRatio="xMidYMid slice" className="size-full" shapeRendering="crispEdges">
        <ellipse cx="776" cy="393.500" rx="120" ry="41.500" fill="#707e89" stroke="#000" strokeWidth={2} />
        <path d="M775 390L0 155" stroke="#b80000" strokeDasharray="1.500 3" />
        <path d="M775 390L0 698" stroke="#08a808" strokeDasharray="1.500 3" />
        <path d="M776.5 436V814" stroke="#101060" strokeDasharray="1 3" />
        <path d="M775 390L1559 79" stroke="#08a808" />
        <path d="M775 390l784 237" stroke="#b80000" />
        <path d="M775.5 390V0" stroke="#0000b8" />
      </svg>
    </main>
  )
}

function Tray() {
  return (
    <aside className="flex w-[280px] shrink-0 flex-col bg-[#f4f7fd]">
      <div className="flex h-[18px] items-center bg-gradient-to-b from-[#bccbdc] to-[#d5e2f1] pl-1 pr-1">
        <h2 className="flex-1 pt-0.5 text-xs leading-4">baidujingyan</h2>
        <button aria-label="pin" className="mr-[9px]">
          <svg viewBox="0 0 8 9" className="h-[9px] w-2" fill="none" stroke="#000">
            <path d="M2 0v5M1.500.5h4V5M0 5.500h8M4 6v3M5 0v5" />
          </svg>
        </button>
        <button aria-label="close tray" className="flex size-3 items-center justify-center bg-[#c94f4f] text-white">
          <X className="size-2" strokeWidth={5} />
        </button>
      </div>
      <div className="mt-0.5 flex flex-col gap-px">
        {trays.map((name) => (
          <div
            key={name}
            className="flex h-[18px] items-center border-l border-t border-[#a4a4a4] bg-gradient-to-b from-[#e9e9e9] to-[#b0b0b0] pr-[3px]"
          >
            <button className="flex flex-1 items-center gap-[7px] pl-2 text-left text-xs leading-4">
              <svg viewBox="0 0 6 8" className="h-2 w-[6px]">
                <path d="M0 0l6 4-6 4z" />
              </svg>
              {name}
            </button>
            <button
              aria-label={`close ${name}`}
              className="flex size-[14px] items-center justify-center border border-[#aaa] bg-[#e6e6e6] text-[#222]"
            >
              <X className="size-[7px]" strokeWidth={4} />
            </button>
          </div>
        ))}
      </div>
    </aside>
  )
}

function TaskButton({ label, children, state = "" }: { label: string; children: ReactNode; state?: string }) {
  return (
    <button aria-label={label} className={`flex h-10 w-12 items-center justify-center ${state}`}>
      {children}
    </button>
  )
}

function Taskbar() {
  return (
    <footer className="flex h-10 shrink-0 items-center bg-[#d6d6d6]">
      <TaskButton label="start">
        <svg viewBox="0 0 16 16" className="size-4">
          <path d="M0 2.300l6.500-.9v6.200H0zM7.300 1.300L16 0v7.600H7.300zM0 8.400h6.500v6.200L0 13.700zM7.300 8.400H16V16l-8.700-1.200z" />
        </svg>
      </TaskButton>
      <TaskButton label="search">
        <svg viewBox="0 0 16 16" className="size-4" fill="none" stroke="#111" strokeWidth={1.300}>
          <circle cx="10.500" cy="5.500" r="5" />
          <path d="M7 9l-7 7" />
        </svg>
      </TaskButton>
      <TaskButton label="cortana">
        <svg viewBox="0 0 16 16" className="size-4" fill="none" stroke="#000" strokeWidth={2}>
          <circle cx="8" cy="8" r="7" />
        </svg>
      </TaskButton>
      <div className="ml-[3px] flex gap-px">
        <TaskButton label="photoshop">
          <span className="flex size-[21px] items-center justify-center rounded-sm border-2 border-[#30c8f8] bg-[#06202c] text-xs font-bold text-white">
            Ps
          </span>
        </TaskButton>
        <TaskButton label="swirl">
          <svg viewBox="0 0 24 20" className="h-5 w-6" fill="none" stroke="#f5a623" strokeWidth={2.600}>
            <path d="M8 9q2-3 4-1 1 4-3 4-5 0-5-5 1-5 7-5 6 1 5 8-2 6-8 6-4 0-6-4M12 15q7 0 10-6" />
          </svg>
        </TaskButton>
        <TaskButton label="browser" state="shadow-[inset_0_-2px_#0a78d4]">
          <svg viewBox="0 0 24 24" className="size-6">
            <circle cx="12" cy="12" r="10" fill="#52b838" />
            <path d="M6 13h13q0-8-7-8-6 1-6 7 1 7 7 7 4 0 5-3" fill="none" stroke="#fff" strokeWidth={3} />
            <path d="M3 22Q6 8 22 1q-1 4-3 5" fill="none" stroke="#7cd040" strokeWidth={2} />
          </svg>
        </TaskButton>
        <TaskButton label="archives" state="shadow-[inset_0_-2px_#0a78d4]">
          <svg viewBox="0 0 24 22" className="h-[22px] w-6">
            <path d="M0 3q0-2 2-2h6l2 2h14v12H0z" fill="#42b4f0" />
            <path d="M0 15h24v3H0z" fill="#f8c020" />
            <path d="M0 18h24v3H0z" fill="#48a848" />
            <path d="M15 0h5v22h-5z" fill="#7a3c18" />
            <path d="M15 13h5v4h-5z" fill="none" stroke="#f0c040" strokeWidth={1.500} />
          </svg>
        </TaskButton>
        <TaskButton label="sketchup" state="bg-[#efefef] shadow-[inset_0_-2px_#0a78d4]">
          <Logo className="h-[22px] w-5" />
        </TaskButton>
        <TaskButton label="chrome" state="shadow-[inset_0_-2px_#0a78d4]">
          <svg viewBox="0 0 24 24" className="size-[23px]">
            <circle cx="12" cy="12" r="11.500" fill="#f8cc30" />
            <path d="M12 12L2 6.200A11.500 11.500 0 0 1 22 6.200z" fill="#dd4b3c" />
            <path d="M1.800 6.600A11.500 11.500 0 0 0 11 23.500l5-8.500L12 12z" fill="#1ea060" />
            <path d="M12 6.500h10.500L12 12z" fill="#dd4b3c" />
            <circle cx="12" cy="12" r="5.500" fill="#fff" />
            <circle cx="12" cy="12" r="4.300" fill="#4285f4" />
          </svg>
        </TaskButton>
      </div>
    </footer>
  )
}

function Logo({ className }: { className: string }) {
  return (
    <svg viewBox="0 0 20 22" className={className}>
      <path d="M0 3L15 0l4 4 1 13L6 22l-2-4V12L0 8z" fill="#e6252c" />
      <path d="M1 6l11-2 3 3v3M5 12l6-2 3 2v4" fill="none" stroke="#fff" strokeWidth={1.600} />
      <path d="M0 10l8-1M4 15l4-1 2 2" fill="none" stroke="#fff" strokeWidth={1.200} />
    </svg>
  )
}

function PaperMark() {
  return (
    <svg
      viewBox="0 0 360 170"
      className="pointer-events-none absolute bottom-[42px] right-[88px] h-[170px] w-[360px] drop-shadow-[0_0_2px_rgba(80,80,90,0.5)]"
      fill="#fff"
      fillOpacity={0.75}
    >
      <text x="0" y="114" fontSize="76" fontWeight="bold" stroke="#fff" strokeOpacity={0.4} fontFamily="Liberation Sans, sans-serif">
        Bai
      </text>
      <ellipse cx="133" cy="50" rx="13" ry="16" />
      <ellipse cx="157" cy="26" rx="12" ry="17" />
      <ellipse cx="188" cy="28" rx="13" ry="17" transform="rotate(12 188 28)" />
      <ellipse cx="207" cy="58" rx="13" ry="16" />
      <path d="M168 52c14 0 20 14 28 22 9 9 17 17 17 27 0 9-7 16-17 16-9 0-18-2-28-2s-19 2-26 2c-9 0-15-7-15-16 0-11 10-18 17-27 7-10 12-22 24-22z" />
      <text
        x="139"
        y="106"
        fontSize="50"
        fontWeight="bold"
        fontFamily="Liberation Sans, sans-serif"
        fill="#d0d0d6"
        fillOpacity={0.7}
        stroke="#9a9aa2"
        strokeOpacity={0.5}
        strokeWidth={1.500}
      >
        du
      </text>
      <text x="222" y="110" fontSize="58" fontWeight="900" fontFamily="Noto Sans CJK SC, sans-serif">
        经验
      </text>
      <text x="4" y="159" fontSize="39" fontFamily="Open Sans, sans-serif">
        jingyan.baidu
      </text>
    </svg>
  )
}

function SiteBadge() {
  return (
    <div className="absolute bottom-0 right-0 flex h-[95px] w-[200px] items-center bg-[#222f56] pl-3 text-[#d2d3d6]">
      <svg viewBox="0 0 46 60" className="h-[60px] w-[46px] shrink-0" fill="#d2d3d6">
        <path d="M12 15l-7-1-2-3 2-4 4 2-1-4 5 4 4 4-4 1-2 4q-2 5 2 8 5 3 13 4 11 2 11 9l-1 7 2 12h-5l0-10-5-6-1 0q-7 1-13-1l-2 7-1 12H6l2-12-1-8Q0 30 1 23q3-4 7-6z" />
        <path d="M14 11q4 0 5-3 0-4 2-7M18 9q-2-3-2-5M20 8q8-1 14 2 7 0 11-7M24 8q0-4 3-7M28 8l0-4M33 9q2 3 5 1M38 8l-1-3" fill="none" stroke="#d2d3d6" strokeWidth={1.600} />
      </svg>
      <div className="flex flex-1 flex-col pl-[7px]">
        <div className="flex h-8 items-center font-['Inter','Noto_Sans_CJK_SC',sans-serif]">
          <span className="text-[36px] leading-8">3D</span>
          <span className="text-[26px] font-medium leading-8">溜溜网</span>
        </div>
        <span className="font-['Inter',sans-serif] text-2xl leading-7">3D66.COM</span>
      </div>
    </div>
  )
}

export default function App() {
  return (
    <div className="relative flex h-screen flex-col overflow-hidden bg-[#f0f0f0] font-['Noto_Sans','Noto_Sans_CJK_SC',sans-serif] text-black">
      <header className="bg-white">
        <div className="flex h-[22px] items-center pl-1 pr-0.5">
          <Logo className="h-[14px] w-3" />
          <h1 className="ml-[7px] flex-1 pt-0.5 text-[13px] leading-5">无标题 - SketchUp Pro 2020</h1>
          <button aria-label="minimize" className="flex w-[46px] justify-center">
            <Minus className="size-3" strokeWidth={2} />
          </button>
          <button aria-label="restore" className="flex w-[46px] justify-center">
            <svg viewBox="0 0 10 10" className="size-[10px]" fill="none" stroke="#000" shapeRendering="crispEdges">
              <path d="M.5 2.500h7v7h-7zM2.500 2V.5h7v7H8" />
            </svg>
          </button>
          <button aria-label="close" className="flex w-[46px] justify-center">
            <svg viewBox="0 0 10 10" className="size-[10px]" stroke="#000">
              <path d="M0 0l10 10M10 0L0 10" />
            </svg>
          </button>
        </div>
        <nav className="flex h-[19px] items-start gap-px pt-0.5 text-xs">
          {menus.map((m) => (
            <button key={m} className="whitespace-nowrap px-[7px] leading-[18px] hover:bg-sky-100">
              {m}
            </button>
          ))}
        </nav>
      </header>

      <div className="flex shrink-0 flex-col overflow-hidden pt-0.5">
        {topRows.map((bars, row) => (
          <div key={row} className={`flex h-[38px] ${row === 0 ? "pl-16" : ""}`}>
            {bars.map((items) => (
              <Toolbar key={items} items={items} />
            ))}
          </div>
        ))}
      </div>

      <div className="flex min-h-0 flex-1">
        <aside className="w-[73px] shrink-0 pt-[54px]">
          <div className="mr-px border-b border-[#a9abaf] bg-[#f1f1f1] pl-0.5">
            <div className="ml-px mr-1 h-[10px] pt-1">
              <div className="border-t-2 border-dotted border-[#b8b8b8]" />
            </div>
            {sideGroups.map((group, i) => (
              <div key={group}>
                {i > 0 && (
                  <div className="mr-1 ml-0.5 h-2 pt-[3px]">
                    <div className="h-px bg-[#808080]" />
                  </div>
                )}
                <div className="flex flex-wrap gap-y-px pb-px">
                  {group.split(" ").map((item) => (
                    <ToolButton key={item} item={item} />
                  ))}
                </div>
              </div>
            ))}
          </div>
        </aside>
        <Viewport />
        <div className="w-[6px] shrink-0 border-l border-white" />
        <Tray />
      </div>

      <div className="flex h-[29px] shrink-0 items-center border-t border-white pl-[6px] text-base">
        <svg viewBox="0 0 14 14" className="size-[14px]" fill="none" stroke="#a0a0a0">
          <circle cx="7" cy="7" r="6.500" />
          <path d="M7 3q4 2 0 8-4-6 0-8z" fill="#a0a0a0" />
        </svg>
        <svg viewBox="0 0 14 14" className="ml-4 size-[14px]" fill="none" stroke="#000" strokeWidth={1.400}>
          <circle cx="7" cy="7" r="6.300" />
          <circle cx="7" cy="4" r="1" fill="#000" />
          <path d="M7 6v5M5 6.500h4" strokeWidth={2} />
        </svg>
        <div className="ml-3 h-[10px] w-px bg-[#777]" />
        <p className="ml-[10px] flex-1 leading-6">选择对象。切换到扩充选择。拖动鼠标选择多项。</p>
        <div className="mr-[10px] h-[10px] w-px bg-[#777]" />
        <label htmlFor="measure" className="leading-6">
          数值
        </label>
        <div className="relative ml-2 h-6">
          <input id="measure" className="h-6 w-[205px] border border-[#7aa7d0] bg-white" />
          <svg viewBox="0 0 12 24" className="absolute left-0 top-0 h-6 w-3">
            <path d="M0 3l12-2v22H5L3 14z" fill="#f4602c" />
          </svg>
        </div>
      </div>

      <Taskbar />

      <svg viewBox="0 0 860 1000" className="pointer-events-none absolute left-0 top-0 h-[1000px] w-[860px]">
        <path d="M40 438l800 547" stroke="#ec2227" strokeWidth={3.500} />
        <path d="M30 431l17 3-5 6-4 8z" fill="#ec2227" stroke="#ec2227" />
      </svg>
      <PaperMark />
      <SiteBadge />
    </div>
  )
}
